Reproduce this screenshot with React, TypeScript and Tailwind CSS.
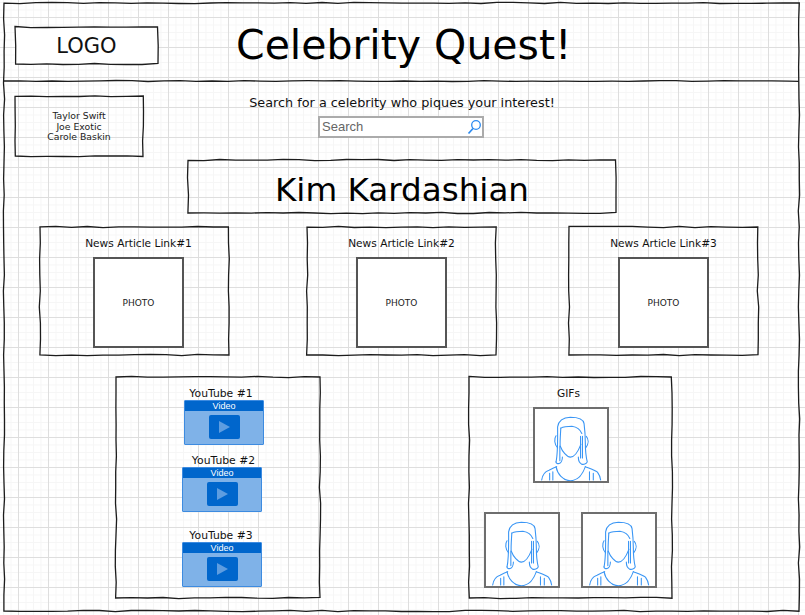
import React from "react";

function wobble(w: number, h: number, seed: number, amp = 0.7) {
  let s = seed;
  const r = () => {
    s = (s * 9301 + 49297) % 233280;
    return (s / 233280 - 0.5) * 2 * amp;
  };
  const pts: [number, number][] = [];
  const step = 16;
  const nx = Math.max(2, Math.round(w / step));
  const ny = Math.max(2, Math.round(h / step));
  for (let i = 0; i < nx; i++) pts.push([(i * w) / nx, r()]);
  for (let i = 0; i < ny; i++) pts.push([w + r(), (i * h) / ny]);
  for (let i = 0; i < nx; i++) pts.push([w - (i * w) / nx, h + r()]);
  for (let i = 0; i < ny; i++) pts.push([r(), h - (i * h) / ny]);
  return "M" + pts.map((p) => `${p[0].toFixed(1)} ${p[1].toFixed(1)}`).join("L") + "Z";
}

function line(w: number, seed: number, amp = 0.5) {
  let s = seed;
  let d = "M0 0";
  for (let x = 16; x < w + 16; x += 16) {
    s = (s * 9301 + 49297) % 233280;
    d += `L${Math.min(x, w)} ${(((s / 233280 - 0.5) * 2 * amp)).toFixed(1)}`;
  }
  return d;
}

function Sketch({ w, h, seed, className, children }: { w: number; h: number; seed: number; className?: string; children?: React.ReactNode }) {
  return (
    <div className={`relative shrink-0 ${className ?? ""}`} style={{ width: w, height: h }}>
      <svg className="absolute left-0 top-0 overflow-visible" width={w} height={h} fill="none">
        <path d={wobble(w, h, seed)} stroke="#1c1c1c" strokeWidth="1.3" />
      </svg>
      {children}
    </div>
  );
}

function Woman() {
  return (
    <svg viewBox="0 0 226 226" className="w-full h-full" fill="none" stroke="#3a96f5" strokeWidth="3.4" strokeLinecap="round" strokeLinejoin="round">
      <path d="M66 166C72 140 71 100 71 56C74 36 90 27 111 26C138 26 152 34 154 46C157 70 158 90 158 106C158 130 160 150 164 166C162 173 152 175 146 173C140 170 136 160 136 151" />
      <path d="M66 166C66 171 72 172 76 171C82 170 86 160 86 151" />
      <path d="M81 60C80 80 78 100 79 116C86 134 100 151 111 151C124 151 136 132 144 111" />
      <path d="M81 60C92 54 104 54 116 54C130 56 142 64 147 77" />
      <path d="M66 84C60 92 60 112 71 122" />
      <path d="M161 86C168 94 170 108 159 122" />
      <path d="M78 116V162M143 86V154M149 86V154" />
      <path d="M21 223C23 206 32 196 44 192C52 188 60 184 68 181" />
      <path d="M66 181C70 204 88 225 111 225C134 225 150 204 158 181" />
      <path d="M158 181C176 188 188 192 196 198C202 206 205 214 206 223" />
      <path d="M46 202V223M56 197V223M171 197V223M183 202V223" />
    </svg>
  );
}

function Avatar() {
  return (
    <div className="w-[76px] h-[76px] border-2 border-[#6e6e6e] bg-white overflow-hidden shrink-0">
      <Woman />
    </div>
  );
}

function Video({ label, labelClass, className }: { label: string; labelClass: string; className: string }) {
  return (
    <div className={`flex flex-col items-center ${className}`}>
      <div className={`text-[10.8px] leading-[13px] text-[#111] whitespace-nowrap ${labelClass}`}>{label}</div>
      <div className="w-[80px] h-[45px] border border-[#3d8be0] bg-[#7fb2e8] flex flex-col items-center rounded-[1px]">
        <div className="w-full h-[10px] bg-[#0066cc] text-white text-[9px] leading-[10px] text-center font-['Liberation_Sans',sans-serif]">Video</div>
        <div className="w-[31px] h-[24px] mt-[4px] bg-[#0066cc] rounded-[2px] flex items-center justify-center">
          <div className="w-0 h-0 border-y-[6px] border-y-transparent border-l-[11px] border-l-[#5e9de0] ml-[1px]" />
        </div>
      </div>
    </div>
  );
}

function News({ n, seed, w = 189, labelClass = "", photoMl }: { n: number; seed: number; w?: number; labelClass?: string; photoMl: string }) {
  return (
    <Sketch w={w} h={128} seed={seed} className="flex flex-col">
      <div className={`text-[10.6px] leading-[13px] mt-[10px] text-center text-[#111] ${labelClass}`}>News Article Link#{n}</div>
      <div className={`w-[91px] h-[91px] mt-[7px] ${photoMl} bg-white border-2 border-[#555] flex items-center justify-center pt-[2px] text-[9px] text-[#222]`}>PHOTO</div>
    </Sketch>
  );
}

export default function App() {
  return (
    <div className="w-[805px] h-[615px] overflow-hidden bg-white pt-[3px] pl-[4px] font-['DejaVu_Sans',sans-serif] bg-[linear-gradient(#dedede_1px,transparent_1px),linear-gradient(90deg,#dedede_1px,transparent_1px),linear-gradient(#f6f6f6_1px,transparent_1px),linear-gradient(90deg,#f6f6f6_1px,transparent_1px)] bg-[size:30px_30px,30px_30px,7.5px_7.5px,7.5px_7.5px] bg-[position:18px_17px,18px_17px,3px_2px,3px_2px]">
      <Sketch w={795} h={608} seed={11} className="flex flex-col">
        {/* header */}
        <div className="relative h-[78px] flex items-center">
          <Sketch w={143} h={37} seed={23} className="ml-[11px] mt-[6px] bg-white flex items-center justify-center pt-[3px] text-[21px] text-[#111]">LOGO</Sketch>
          <div className="ml-[78px] text-[41px] leading-[50px] text-black whitespace-nowrap mt-[6px]">Celebrity Quest!</div>
          <svg className="absolute left-0 top-full overflow-visible" width="795" height="2" fill="none">
            <path d={line(795, 5)} stroke="#1c1c1c" strokeWidth="1.3" />
          </svg>
        </div>
        {/* search row */}
        <div className="flex h-[79px]">
          <Sketch w={128} h={60} seed={37} className="ml-[11px] mt-[15px] flex flex-col items-center justify-center pt-[2px] text-[9.3px] leading-[10.5px] text-[#222]">
            <div>Taylor Swift</div>
            <div>Joe Exotic</div>
            <div>Carole Baskin</div>
          </Sketch>
          <div className="ml-[105px] w-[306px] flex flex-col items-center">
            <div className="text-[12.8px] leading-[16px] mt-[14px] ml-[2px] text-[#111] whitespace-nowrap">Search for a celebrity who piques your interest!</div>
            <div className="w-[166px] h-[22px] mt-[5px] bg-white border-2 border-[#ababab] flex items-center justify-between pl-[2px] pr-[0px]">
              <span className="text-[13px] text-[#666] font-['Liberation_Sans',sans-serif]">Search</span>
              <svg width="16" height="16" viewBox="0 0 16 16" fill="none" stroke="#2b8af0" strokeWidth="1.3">
                <circle cx="10" cy="6" r="4.3" />
                <path d="M7 9.5 2.5 14.5" strokeWidth="1.7" />
              </svg>
            </div>
          </div>
        </div>
        {/* name */}
        <Sketch w={428} h={53} seed={41} className="ml-[184px] flex items-center justify-center pt-[8px] text-[32.6px] text-black">Kim Kardashian</Sketch>
        {/* news */}
        <div className="flex mt-[14px] ml-[36px]">
          <News n={1} seed={53} labelClass="ml-[8px]" photoMl="ml-[53px]" />
          <div className="ml-[78px]"><News n={2} seed={61} photoMl="ml-[49px]" /></div>
          <div className="ml-[73px]"><News n={3} seed={71} photoMl="ml-[49px]" /></div>
        </div>
        {/* media */}
        <div className="flex mt-[22px] ml-[112px]">
          <Sketch w={204} h={221} seed={83} className="flex flex-col">
            <Video label="YouTube #1" labelClass="ml-[-6px]" className="mt-[10px] ml-[12px]" />
            <Video label="YouTube #2" labelClass="ml-[3px]" className="mt-[9px] ml-[8px]" />
            <Video label="YouTube #3" labelClass="ml-[-2px]" className="mt-[17px] ml-[8px]" />
          </Sketch>
          <Sketch w={203} h={221} seed={97} className="ml-[149px] flex flex-col">
            <div className="text-[10.6px] leading-[13px] text-center mt-[10px] pr-[4px] text-[#111]">GIFs</div>
            <div className="ml-[64px] mt-[7px]"><Avatar /></div>
            <div className="flex mt-[29px] ml-[15px] gap-[21px]">
              <Avatar />
              <Avatar />
            </div>
          </Sketch>
        </div>
      </Sketch>
    </div>
  );
}
